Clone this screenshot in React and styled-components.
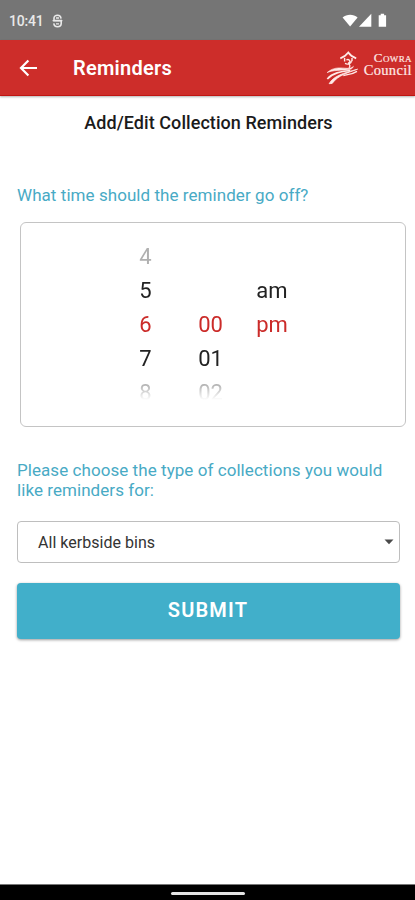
import React, { useState } from 'react';
import styled, { createGlobalStyle } from 'styled-components';

const GlobalStyle = createGlobalStyle`
  * {
    box-sizing: border-box;
  }

  body {
    margin: 0;
    background-color: #fff;
    font-family: Roboto, sans-serif;
  }
`;

const Screen = styled.div`
  display: flex;
  flex-direction: column;
  width: 415px;
  height: 900px;
  background-color: #fff;
  overflow: hidden;
`;

const StatusBar = styled.div`
  display: flex;
  align-items: center;
  height: 40px;
  padding: 1px 26px 0 9px;
  background-color: #757575;
  color: #e9e9e9;
  flex-shrink: 0;
`;

const Clock = styled.span`
  width: 43px;
  font-size: 14px;
  font-weight: 500;
  letter-spacing: -0.2px;
`;

const StatusIcons = styled.div`
  display: flex;
  align-items: center;
  margin-left: auto;
`;

const Header = styled.header`
  display: flex;
  align-items: center;
  height: 56px;
  padding: 0 3px 0 19px;
  background-color: #cd2d2a;
  border-bottom: 1px solid #c01512;
  box-shadow: 0 1px 2px rgba(0, 0, 0, 0.3);
  color: #fff;
  flex-shrink: 0;
`;

const BackButton = styled.button`
  display: flex;
  padding: 0;
  border: none;
  background: none;
  color: #fff;
`;

const HeaderTitle = styled.h1`
  margin: 0 0 0 35px;
  font-size: 20px;
  font-weight: 600;
  letter-spacing: 0.25px;
`;

const Logo = styled.div`
  display: flex;
  align-items: center;
  margin-left: auto;
`;

const LogoName = styled.div`
  margin: 0 0 7px 5px;
  font-family: 'Liberation Serif', serif;
  text-align: right;
  color: #ffe9e6;
  -webkit-text-stroke: 0.2px #ffe9e6;
`;

const LogoLine = styled.div`
  height: 13px;
  line-height: 13px;
  font-size: ${(props) => props.$size};
  font-variant: ${(props) => (props.$caps ? 'small-caps' : 'normal')};
  letter-spacing: ${(props) => props.$spacing};
`;

const Content = styled.main`
  display: flex;
  flex-direction: column;
  flex: 1;
  padding: 15px 15px 0 17px;
`;

const PageTitle = styled.h2`
  margin: 0 0 50px;
  font-size: 18px;
  line-height: 24px;
  font-weight: 500;
  letter-spacing: 0.06px;
  text-align: center;
  color: #1b1b1b;
`;

const Label = styled.p`
  margin: 0;
  font-size: 17px;
  line-height: 20px;
  letter-spacing: 0.06px;
  color: #48aac5;
`;

const TimePicker = styled.div`
  display: flex;
  height: 205px;
  width: 386px;
  margin: 17px 0 33px 3px;
  padding: 17px 0 0 101px;
  border: 1px solid #c4c4c4;
  border-radius: 6px;
  flex-shrink: 0;
`;

const Column = styled.div`
  width: ${(props) => props.$width};
  height: 170px;
  text-align: center;
  mask-image: linear-gradient(#000 144px, transparent 160px);
`;

const Option = styled.div`
  height: 34px;
  font-size: 22px;
  line-height: 34px;
  color: ${(props) => {
    if (props.$faded) return '#b0b0b0';
    return props.$selected ? '#cb2b29' : '#222';
  }};
`;

const SelectBox = styled.button`
  display: flex;
  align-items: center;
  justify-content: space-between;
  width: 383px;
  height: 42px;
  margin: 21px 0 20px;
  padding: 0 5px 0 20px;
  border: 1px solid #bebebe;
  border-radius: 4px;
  background-color: #fff;
  color: #333;
  font-family: inherit;
  font-size: 16px;
  letter-spacing: 0.03px;
  flex-shrink: 0;
`;

const SubmitButton = styled.button`
  width: 383px;
  height: 56px;
  padding: 0 1px 2px 0;
  border: none;
  border-radius: 4px;
  background-color: #41afca;
  box-shadow: 0 1px 3px rgba(0, 0, 0, 0.4);
  color: #fff;
  font-family: inherit;
  font-size: 20px;
  font-weight: 600;
  letter-spacing: 1.2px;
  flex-shrink: 0;
`;

const NavigationBar = styled.div`
  display: flex;
  justify-content: center;
  height: 16px;
  padding-top: 7px;
  background-color: #000;
  border-top: 1px solid #777;
  flex-shrink: 0;
`;

const HomeHandle = styled.div`
  width: 74px;
  height: 3px;
  border-radius: 2px;
  background-color: #e4e4e4;
`;

const SyncIcon = () => (
  <svg width="11" height="14" viewBox="0 0 11 14" fill="none" stroke="currentColor">
    <path d="M9 4.6C8.8 2.3 7.5 1.2 5.5 1.2S2 2.4 2 4.3v2.3h7.2v3c0 2-1.6 3.1-3.7 3.1S2 11.7 1.8 9.4" strokeWidth="1.6" />
    <path d="M.6 6.6h9.8M4 4h3M4 9.8h3" strokeWidth="1.3" />
  </svg>
);

const SignalIcons = () => (
  <svg width="47" height="16" viewBox="0 0 47 16" fill="#fff">
    <path d="M.6 4.4C4.9.8 11.3.8 15.6 4.4L8.1 13.5Z" />
    <path d="M29.3.8V13.7H17Z" />
    <path d="M36.7 2.2h2V.7h3.4v1.5h2v11.5h-7.4Z" />
  </svg>
);

const BackIcon = () => (
  <svg width="19" height="18" viewBox="0 0 19 18" fill="none" stroke="currentColor" strokeWidth="2.2">
    <path d="M18 9H2.5M9.4 1.5L2 9l7.4 7.5" />
  </svg>
);

const CouncilMark = () => (
  <svg width="33" height="34" viewBox="0 0 33 34" fill="none" stroke="#ffeae7">
    <path d="M14.3 7.3Q19.5 5.6 22.3 1.6Q25 5.6 30.2 7.3" strokeWidth="1.8" />
    <path d="M18.6 7v3.4M26 7v3.2" strokeWidth="1.4" />
    <path d="M20.4 8.8c3.5-1.2 4.8 2.6 1.6 3.4M19 12.4c3 1.6 6.6.2 6.4-2.8M22.4 12.8q2.6 1.6.6 4" strokeWidth="1.3" />
    <path d="M1.1 21.6C8 15.4 15 17 21 17.3c3 .1 5.2-.4 6.4-2C26.4 20 18 18.7 11.6 19.4C7.3 19.8 3.5 20.4 1.1 21.6Z" fill="#ffeae7" strokeWidth=".6" />
    <path d="M1.3 28C6.6 21.9 14.5 20.6 24.2 19.5" strokeWidth="1.7" />
    <path d="M3.1 32.7C7.2 25.2 17.4 21.9 31.6 18.2C22 21.8 12 24.2 6.2 32.4Z" fill="#ffeae7" strokeWidth=".8" />
    <path d="M17.3 24.5C22.5 23.2 25.2 24 31 20.4" strokeWidth="1.3" />
  </svg>
);

const CaretIcon = () => (
  <svg width="10" height="6" viewBox="0 0 10 6" fill="#4a4a4a">
    <path d="M.5.5h9L5 5.3Z" />
  </svg>
);

const columns = [
  { width: '47px', items: ['4', '5', '6', '7', '8'] },
  { width: '83px', items: ['', '', '00', '01', '02'] },
  { width: '40px', items: ['', 'am', 'pm', '', ''] },
];

function App() {
  const [collection] = useState('All kerbside bins');

  return (
    <>
      <GlobalStyle />
      <Screen>
        <StatusBar>
          <Clock>10:41</Clock>
          <SyncIcon />
          <StatusIcons>
            <SignalIcons />
          </StatusIcons>
        </StatusBar>

        <Header>
          <BackButton aria-label="Back">
            <BackIcon />
          </BackButton>
          <HeaderTitle>Reminders</HeaderTitle>
          <Logo>
            <CouncilMark />
            <LogoName>
              <LogoLine $caps $size="13px" $spacing="0.4px">Cowra</LogoLine>
              <LogoLine $size="14.5px" $spacing="0.35px">Council</LogoLine>
            </LogoName>
          </Logo>
        </Header>

        <Content>
          <PageTitle>Add/Edit Collection Reminders</PageTitle>
          <Label>What time should the reminder go off?</Label>
          <TimePicker>
            {columns.map((column) => (
              <Column key={column.width} $width={column.width}>
                {column.items.map((item, index) => (
                  <Option key={index} $selected={index === 2} $faded={index === 0 || index === 4}>
                    {item}
                  </Option>
                ))}
              </Column>
            ))}
          </TimePicker>
          <Label>
            Please choose the type of collections you would
            <br />
            like reminders for:
          </Label>
          <SelectBox>
            {collection}
            <CaretIcon />
          </SelectBox>
          <SubmitButton>SUBMIT</SubmitButton>
        </Content>

        <NavigationBar>
          <HomeHandle />
        </NavigationBar>
      </Screen>
    </>
  );
}

export default App;
